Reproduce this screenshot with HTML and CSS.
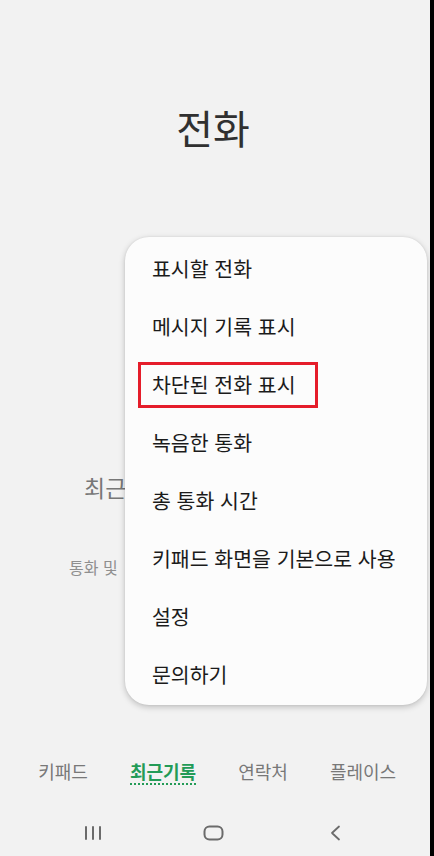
FILE: index.html
```html
<!DOCTYPE html>
<html lang="ko">
<head>
<meta charset="utf-8">
<title>전화</title>
<link rel="stylesheet" href="styles.css">
</head>
<body>
<div class="screen">
  <div class="header">
    <h1 class="title">전화</h1>
  </div>
  <div class="empty">
    <p class="empty-main">최근</p>
    <p class="empty-sub">통화 및</p>
  </div>
  <div class="spacer"></div>
  <nav class="tabs">
    <div class="tab"><span>키패드</span></div>
    <div class="tab active"><span>최근기록</span></div>
    <div class="tab"><span>연락처</span></div>
    <div class="tab"><span>플레이스</span></div>
  </nav>
  <div class="navbar">
    <div class="nav-btn">
      <svg width="18" height="14" viewBox="0 0 18 14"><path d="M2 1v12M9 1v12M16 1v12" stroke="#6b6b6b" stroke-width="2" fill="none" stroke-linecap="round"/></svg>
    </div>
    <div class="nav-btn">
      <svg width="21" height="16" viewBox="0 0 21 16"><rect x="1.5" y="1.5" width="18" height="13" rx="5" stroke="#6b6b6b" stroke-width="2" fill="none"/></svg>
    </div>
    <div class="nav-btn">
      <svg width="12" height="16" viewBox="0 0 12 16"><path d="M10 1.5L3 8l7 6.5" stroke="#6b6b6b" stroke-width="1.8" fill="none" stroke-linecap="round" stroke-linejoin="round"/></svg>
    </div>
  </div>

  <ul class="menu">
    <li class="menu-item">표시할 전화</li>
    <li class="menu-item">메시지 기록 표시</li>
    <li class="menu-item marked">차단된 전화 표시<span class="highlight"></span></li>
    <li class="menu-item">녹음한 통화</li>
    <li class="menu-item">총 통화 시간</li>
    <li class="menu-item">키패드 화면을 기본으로 사용</li>
    <li class="menu-item">설정</li>
    <li class="menu-item">문의하기</li>
  </ul>
</div>
</body>
</html>
```

FILE: styles.css
```css
html, body {
  margin: 0;
  padding: 0;
  background: #000;
}

body {
  font-family: "Noto Sans CJK KR", "Noto Sans", sans-serif;
}

.screen {
  position: relative;
  width: 430px;
  height: 856px;
  border-right: 4px solid #000;
  background: #f2f2f2;
  display: flex;
  flex-direction: column;
  overflow: hidden;
}

.header {
  height: 200px;
  padding-top: 103px;
  box-sizing: border-box;
}

.title {
  margin: 0;
  padding-right: 4px;
  text-align: center;
  font-size: 40px;
  line-height: 48px;
  font-weight: 400;
  color: #303030;
}

.empty {
  padding-top: 272px;
}

.empty-main {
  margin: 0;
  padding-left: 84px;
  font-size: 23px;
  line-height: 30px;
  color: #777;
  white-space: nowrap;
}

.empty-sub {
  margin: 54px 0 0;
  padding-left: 69px;
  font-size: 16px;
  line-height: 22px;
  color: #8f8f8f;
  white-space: nowrap;
}

.spacer {
  flex: 1;
}

.tabs {
  height: 55px;
  box-sizing: border-box;
  padding: 13px 17px 0 13px;
  display: flex;
}

.tab {
  flex: 1;
  text-align: center;
  font-size: 18px;
  color: #787878;
}

.tab span {
  display: inline-block;
  line-height: 22px;
  padding-bottom: 1px;
  border-bottom: 2px solid transparent;
}

.tab.active span {
  color: #239b57;
  font-weight: 700;
  border-bottom: 2px dotted #239b57;
}

.navbar {
  height: 56px;
  box-sizing: border-box;
  padding-top: 10px;
  display: flex;
  align-items: center;
}

.nav-btn {
  display: flex;
  justify-content: center;
  align-items: center;
  height: 20px;
}

.nav-btn:nth-child(1) { width: 186px; }
.nav-btn:nth-child(2) { width: 56px; }
.nav-btn:nth-child(3) { width: 190px; }

.menu {
  position: absolute;
  left: 125px;
  top: 237px;
  width: 302px;
  margin: 0;
  padding: 2px 0 2px;
  list-style: none;
  background: #fcfcfc;
  border-radius: 24px;
  box-shadow: 0 2px 6px rgba(0, 0, 0, 0.22), 0 0 2px rgba(0, 0, 0, 0.08);
}

.menu-item {
  position: relative;
  height: 58px;
  line-height: 58px;
  padding-left: 27px;
  font-size: 20.5px;
  color: #1b1b1b;
  white-space: nowrap;
}

.highlight {
  position: absolute;
  left: 13px;
  top: 7px;
  width: 180px;
  height: 46px;
  box-sizing: border-box;
  border: 3px solid #e51d2a;
}
```
